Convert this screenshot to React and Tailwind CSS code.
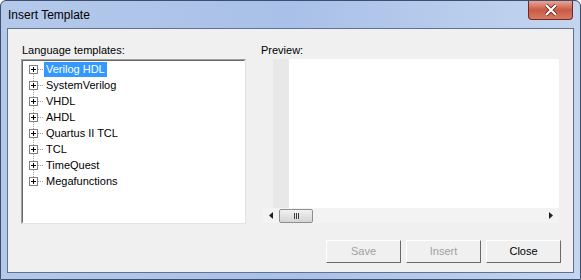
export default function App() {
  const items = ["Verilog HDL", "SystemVerilog", "VHDL", "AHDL", "Quartus II TCL", "TCL", "TimeQuest", "Megafunctions"];
  return (
    <div className="w-[581px] h-[280px] flex flex-col bg-gradient-to-r from-[#b4c9ea] via-[#a9c0e8] to-[#c3d5ef] border border-[#3c4f6e] rounded-t-[6px] overflow-hidden" style={{ fontFamily: '"Liberation Sans", Arial, sans-serif' }}>
      <div className="h-[27px] flex items-start shrink-0">
        <div className="pl-[7px] pt-[7px] text-[12px] text-black leading-[14px] flex-1">Insert Template</div>
        <div className="mr-[7px] w-[45px] h-[19px] rounded-b-[4px] border border-[#6e2a22] border-t-0 bg-gradient-to-b from-[#e6a596] via-[#c95a45] to-[#d77a62] flex items-center justify-center">
          <svg width="14" height="12" viewBox="0 0 14 12">
            <path d="M2 1 L12 11 M12 1 L2 11" stroke="#5a1a10" strokeWidth="3.6" />
            <path d="M2 1 L12 11 M12 1 L2 11" stroke="#ffffff" strokeWidth="2.2" />
          </svg>
        </div>
      </div>
      <div className="flex-1 mx-[6px] mb-[7px] border border-[#5f7290] bg-[#f0f0f0] relative flex flex-col">
        <div className="flex flex-1 pt-[15px]">
          <div className="ml-[13px] w-[225px] flex flex-col">
            <div className="text-[11px] leading-[13px] h-[15px] pl-[1px]">Language templates:</div>
            <div className="h-[165px] border border-t-[#a0a0a0] border-l-[#a0a0a0] border-r-[#e3e3e3] border-b-[#e3e3e3] bg-white">
              <div className="w-full h-full border border-t-[#696969] border-l-[#696969] border-r-white border-b-white relative">
                <div className="absolute left-[10px] top-[8px] h-[112px] border-l border-dotted border-[#a0a0a0]" />
                {items.map((t, i) => (
                  <div key={t} className="h-[16px] flex items-center relative">
                    <div className="ml-[6px] w-[9px] h-[9px] border border-[#808080] bg-white flex items-center justify-center relative z-10">
                      <svg width="7" height="7" viewBox="0 0 7 7"><path d="M1 3.5 H6 M3.5 1 V6" stroke="#000" strokeWidth="1" /></svg>
                    </div>
                    <div className="w-[5px] border-t border-dotted border-[#a0a0a0]" />
                    <div className={"ml-[1px] px-[2px] text-[11px] leading-[15px] " + (i === 0 ? "bg-[#3399ff] text-white" : "text-black")}>{t}</div>
                  </div>
                ))}
              </div>
            </div>
          </div>
          <div className="ml-[14px] flex flex-col">
            <div className="text-[11px] leading-[13px] h-[15px] ml-[1px]">Preview:</div>
            <div className="ml-[3px] w-[296px] h-[164px] flex flex-col">
              <div className="flex flex-1">
                <div className="w-[10px] bg-[#f0f0f0]" />
                <div className="w-[16px] bg-[#e8e8e8]" />
                <div className="flex-1 bg-white" />
              </div>
              <div className="h-[15px] bg-[#f3f3f3] flex items-center">
                <div className="w-[16px] flex items-center justify-center">
                  <svg width="4" height="7" viewBox="0 0 4 7"><path d="M4 0 L0 3.5 L4 7 Z" fill="#202020" /></svg>
                </div>
                <div className="w-[34px] h-[14px] border border-[#8e8f8f] rounded-[2px] bg-gradient-to-b from-[#f2f2f2] to-[#d4d4d4] flex items-center justify-center gap-[1px]">
                  <div className="w-[1px] h-[6px] bg-[#404040]" />
                  <div className="w-[1px] h-[6px] bg-[#404040]" />
                  <div className="w-[1px] h-[6px] bg-[#404040]" />
                </div>
                <div className="flex-1" />
                <div className="w-[16px] flex items-center justify-center">
                  <svg width="4" height="7" viewBox="0 0 4 7"><path d="M0 0 L4 3.5 L0 7 Z" fill="#202020" /></svg>
                </div>
              </div>
            </div>
          </div>
        </div>
        <div className="flex justify-end gap-[5px] pr-[12px] pb-[9px] pt-[16px]">
          {["Save", "Insert", "Close"].map((b) => (
            <div key={b} className={"w-[75px] h-[23px] border border-t-white border-l-white border-r-[#696969] border-b-[#696969] bg-[#f0f0f0] flex items-center justify-center text-[11px] " + (b === "Close" ? "text-black" : "text-[#a0a0a0]")}>
              {b}
            </div>
          ))}
        </div>
      </div>
    </div>
  );
}
